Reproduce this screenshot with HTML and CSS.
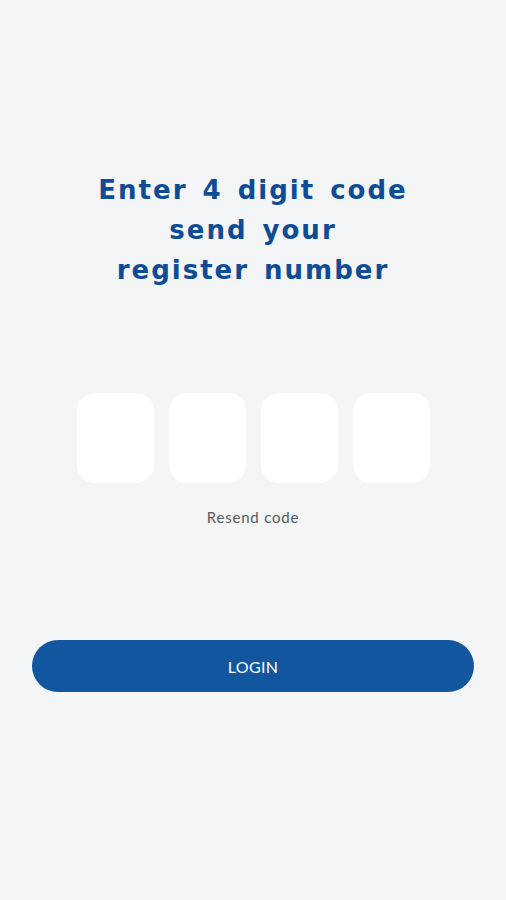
FILE: index.html
```html
<!DOCTYPE html>
<html lang="en">
<head>
  <meta charset="UTF-8">
  <meta name="viewport" content="width=device-width, initial-scale=1.0">
  <title>Verify code</title>
  <link rel="stylesheet" href="styles.css">
</head>
<body>
  <div class="screen">
    <h1 class="title">Enter 4 digit code<br>send your<br>register number</h1>

    <div class="code-row">
      <input class="code-box" type="text" maxlength="1" inputmode="numeric">
      <input class="code-box" type="text" maxlength="1" inputmode="numeric">
      <input class="code-box" type="text" maxlength="1" inputmode="numeric">
      <input class="code-box" type="text" maxlength="1" inputmode="numeric">
    </div>

    <p class="resend">Resend code</p>

    <button class="login">LOGIN</button>
  </div>
</body>
</html>
```

FILE: styles.css
```css
body {
  margin: 0;
  background-color: #f3f5f7;
  font-family: Lato, 'Open Sans', sans-serif;
}
.screen {
  display: flex;
  flex-direction: column;
  align-items: center;
  padding-top: 170px;
}
.title {
  margin: 0;
  font-family: 'DejaVu Sans', sans-serif;
  font-weight: bold;
  font-size: 26px;
  line-height: 40px;
  letter-spacing: 2px;
  word-spacing: 4px;
  color: #0e4c95;
  text-align: center;
}
.code-row {
  display: flex;
  gap: 15px;
  margin-top: 103px;
}
.code-box {
  width: 77px;
  height: 90px;
  box-sizing: border-box;
  border: none;
  border-radius: 18px;
  background-color: #fff;
  text-align: center;
  font-size: 28px;
  outline: none;
}
.resend {
  margin: 25px 0 0;
  font-size: 15px;
  letter-spacing: 0.8px;
  color: #5a5a5a;
}
.login {
  margin-top: 114px;
  width: 442px;
  height: 52px;
  border: none;
  border-radius: 26px;
  background-color: #11569f;
  color: #fff;
  font-family: Lato, sans-serif;
  font-size: 16px;
  letter-spacing: 0.3px;
  cursor: pointer;
}
```
